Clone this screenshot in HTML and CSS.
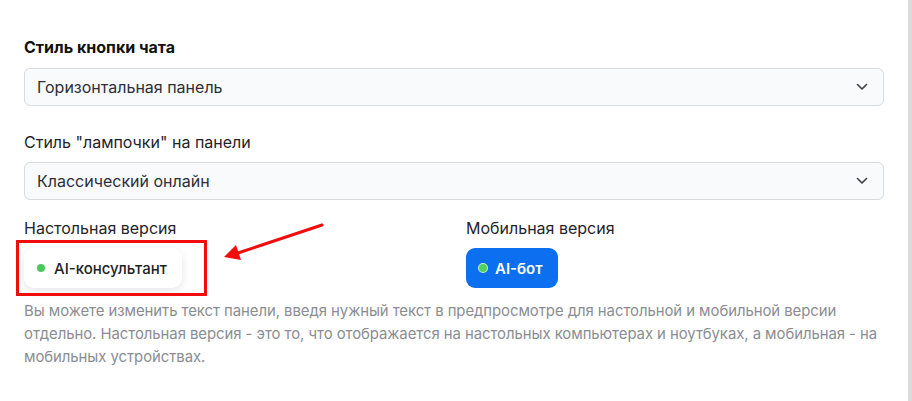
FILE: index.html
```html
<!DOCTYPE html>
<html lang="ru">
<head>
    <meta charset="UTF-8">
    <meta name="viewport" content="width=device-width, initial-scale=1.0">
    <title>Стиль кнопки чата</title>
    <link rel="stylesheet" href="styles.css">
</head>
<body>
    <div class="panel">
        <div class="settings">
            <h2 class="title">Стиль кнопки чата</h2>
            <div class="select-box">
                <span>Горизонтальная панель</span>
                <svg class="chevron" width="12" height="8" viewBox="0 0 12 8"><path d="M1.5 1.5 6 6l4.5-4.5" fill="none" stroke="#3a3f47" stroke-width="1.6" stroke-linecap="round" stroke-linejoin="round"/></svg>
            </div>

            <label class="field-label">Стиль "лампочки" на панели</label>
            <div class="select-box">
                <span>Классический онлайн</span>
                <svg class="chevron" width="12" height="8" viewBox="0 0 12 8"><path d="M1.5 1.5 6 6l4.5-4.5" fill="none" stroke="#3a3f47" stroke-width="1.6" stroke-linecap="round" stroke-linejoin="round"/></svg>
            </div>

            <div class="preview-grid">
                <div class="preview desktop">
                    <div class="preview-label">Настольная версия</div>
                    <div class="pill pill-light">
                        <span class="dot"></span>
                        <span>AI-консультант</span>
                    </div>
                    <!-- annotation -->
                    <div class="mark-box"></div>
                    <svg class="mark-arrow" width="100" height="40" viewBox="0 0 100 40">
                        <line x1="98" y1="2" x2="14" y2="30" stroke="#f20d0d" stroke-width="3" stroke-linecap="round"/>
                        <polygon points="0,34 12,22 17,37" fill="#f20d0d"/>
                    </svg>
                </div>
                <div class="preview">
                    <div class="preview-label">Мобильная версия</div>
                    <div class="pill pill-blue">
                        <span class="dot"></span>
                        <span>AI-бот</span>
                    </div>
                </div>
            </div>

            <p class="hint">Вы можете изменить текст панели, введя нужный текст в предпросмотре для настольной и мобильной версии отдельно. Настольная версия - это то, что отображается на настольных компьютерах и ноутбуках, а мобильная - на мобильных устройствах.</p>
        </div>
    </div>
</body>
</html>
```

FILE: styles.css
```css
* {
    margin: 0;
    padding: 0;
    box-sizing: border-box;
    font-family: Inter, "Noto Sans", sans-serif;
}
body {
    background-color: white;
    color: #1f2328;
}
.panel {
    height: 100vh;
    border-right: 4px solid #dadada;
    overflow: hidden;
}
.settings {
    width: 884px;
    padding: 35px 0 0 24px;
}
.title {
    font-size: 16px;
    font-weight: 700;
    line-height: 24px;
    color: #111;
    margin-bottom: 9px;
}
.select-box {
    display: flex;
    align-items: center;
    justify-content: space-between;
    height: 38px;
    padding: 0 15px 0 12px;
    background-color: #f9fafb;
    border: 1px solid #d8dbe0;
    border-radius: 6px;
    font-size: 16px;
    color: #2b2f36;
}
.field-label {
    display: block;
    margin: 24px 0 8px;
    font-size: 16px;
    line-height: 24px;
    color: #1f2328;
}
.preview-grid {
    display: grid;
    grid-template-columns: 1fr 1fr;
    gap: 24px;
    margin-top: 16px;
}
.preview {
    position: relative;
}
.preview-label {
    font-size: 16px;
    line-height: 24px;
    margin-bottom: 8px;
    color: #1f2328;
}
.pill {
    display: inline-flex;
    align-items: center;
    gap: 9px;
    height: 40px;
    border-radius: 10px;
}
.pill-light {
    padding: 0 15px 0 13px;
    background-color: white;
    box-shadow: 0 3px 10px rgba(0,0,0,0.1);
    font-size: 15px;
    font-weight: 500;
    color: #222;
}
.pill-blue {
    padding: 0 15px 0 12px;
    background-color: #0b6ff0;
    border-radius: 9px;
    font-size: 15px;
    font-weight: 600;
    color: white;
    gap: 7px;
}
.dot {
    width: 8px;
    height: 8px;
    border-radius: 50%;
    background-color: #4cc85a;
}
.pill-blue .dot {
    width: 10px;
    height: 10px;
    background-color: #4fd35e;
    border: 1px solid rgba(255,255,255,0.7);
}
.mark-box {
    position: absolute;
    left: -8px;
    top: 24px;
    width: 191px;
    height: 56px;
    border: 3px solid #f20d0d;
}
.mark-arrow {
    position: absolute;
    left: 200px;
    top: 7px;
}
.hint {
    margin-top: 12px;
    font-size: 14.9px;
    letter-spacing: -0.05px;
    line-height: 23px;
    color: #8a8d93;
}
```
